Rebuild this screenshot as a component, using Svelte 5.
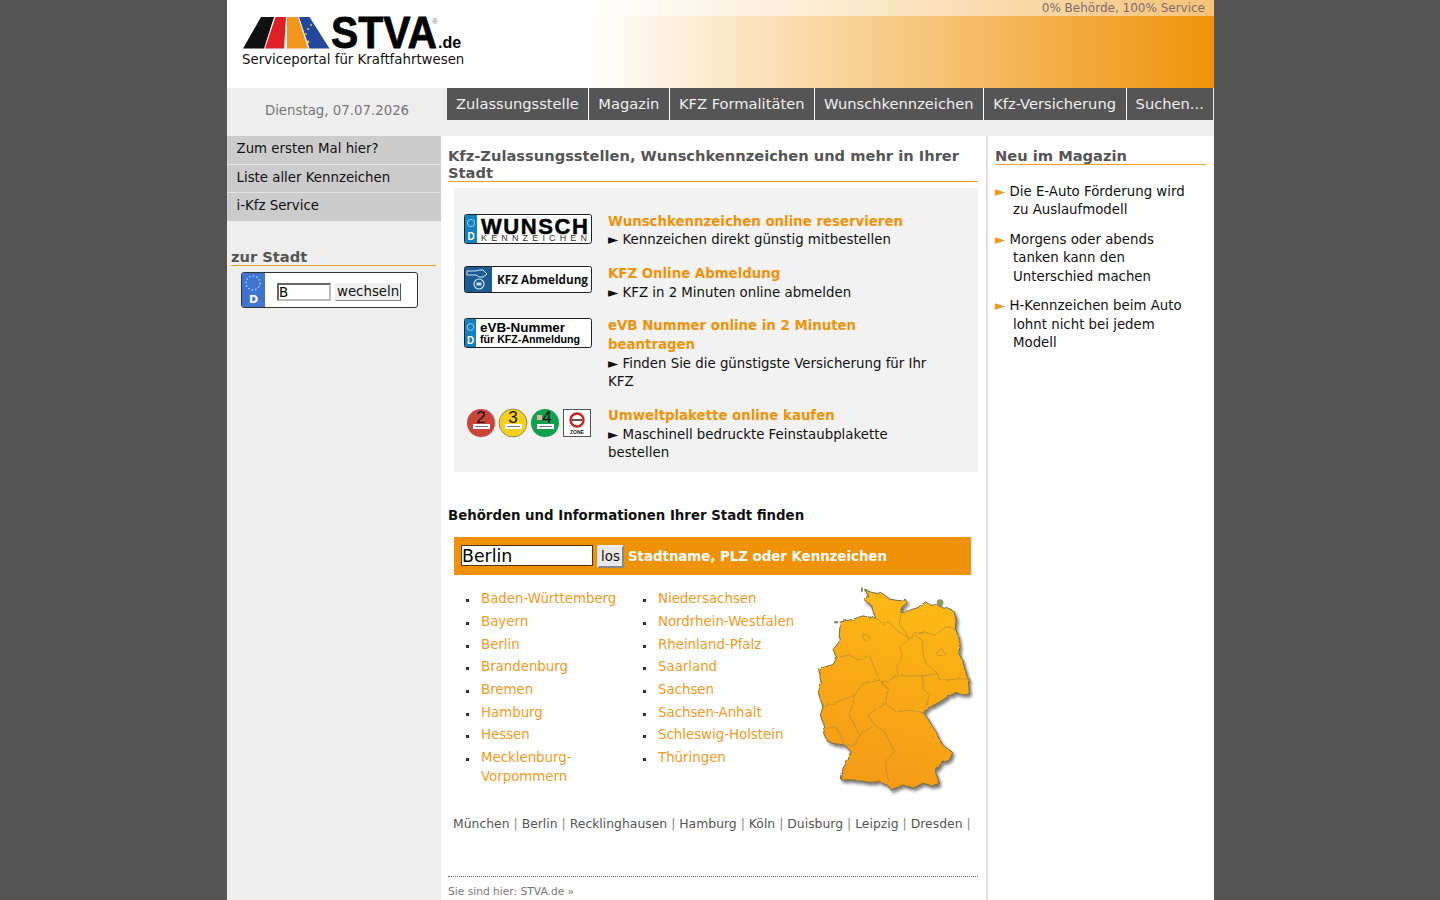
<script>
  const tabs = ['Zulassungsstelle', 'Magazin', 'KFZ Formalitäten', 'Wunschkennzeichen', 'Kfz-Versicherung', 'Suchen...'];
  const sideMenu = ['Zum ersten Mal hier?', 'Liste aller Kennzeichen', 'i-Kfz Service'];
  const statesA = ['Baden-Württemberg', 'Bayern', 'Berlin', 'Brandenburg', 'Bremen', 'Hamburg', 'Hessen', 'Mecklenburg-Vorpommern'];
  const statesB = ['Niedersachsen', 'Nordrhein-Westfalen', 'Rheinland-Pfalz', 'Saarland', 'Sachsen', 'Sachsen-Anhalt', 'Schleswig-Holstein', 'Thüringen'];
  const cities = ['München', 'Berlin', 'Recklinghausen', 'Hamburg', 'Köln', 'Duisburg', 'Leipzig', 'Dresden'];
  const news = [
    'Die E-Auto Förderung wird zu Auslaufmodell',
    'Morgens oder abends tanken kann den Unterschied machen',
    'H-Kennzeichen beim Auto lohnt nicht bei jedem Modell',
  ];
  const germany = 'M197 33 L225 45 L245 42 L262 55 L272 62 L298 66 L318 62 L323 72 L308 85 L302 100 L315 102 L335 93 L352 88 L378 70 L395 80 L410 78 L425 85 L445 88 L465 100 L470 125 L468 150 L478 175 L482 205 L478 225 L490 245 L497 275 L507 300 L510 345 L495 352 L470 342 L450 352 L425 368 L395 385 L372 403 L385 420 L400 445 L415 470 L430 500 L460 522 L450 545 L425 555 L408 580 L420 615 L400 622 L370 615 L340 630 L310 620 L275 635 L265 622 L240 610 L205 612 L175 605 L125 605 L130 570 L145 545 L155 520 L135 500 L100 495 L85 490 L72 465 L75 445 L62 410 L70 385 L55 340 L65 315 L57 270 L100 258 L112 238 L100 213 L118 190 L122 130 L160 122 L190 112 L228 118 L215 80 L195 65 L205 50 Z';
  const borders = [
    'M228 118 L250 135 L270 130 L285 150 L330 180',
    'M330 180 L345 165 L375 160 L405 170 L440 145 L468 150',
    'M305 105 L300 135 L330 180',
    'M330 180 L300 205 L310 230 L292 265 L295 292 L370 292 L415 285 L380 255 L370 220 L370 185 L345 170',
    'M415 285 L420 305 L505 300',
    'M370 292 L370 330 L390 350 L372 403',
    'M295 292 L245 315 L265 330 L258 375 L290 400 L330 395 L372 403',
    'M120 235 L150 230 L180 245 L210 230 L225 270 L240 305 L190 315 L165 350 L100 375 L70 385',
    'M240 305 L265 330 M258 375 L205 410 L225 440 L180 470 L150 410 L165 350',
    'M180 470 L165 500 L135 500 L110 445 L80 450',
    'M225 440 L255 460 L285 520 L258 550 L265 610',
    'M190 165 L210 175 L205 190 L190 180 Z',
    'M410 225 L425 208 L440 230 L415 232 Z',
  ];
</script>

<div class="page">
  <header class="top">
    <div class="brand">
      <svg class="logo" viewBox="0 0 222 36" width="222" height="36" role="img" aria-label="STVA.de">
        <polygon points="2,33.5 23,33.5 33,2 20,2" fill="#111" />
        <polygon points="24,33.5 43,33.5 45,2 34.5,2" fill="#e02027" />
        <polygon points="46,33.5 67,33.5 57,2 46,2" fill="#f0951e" />
        <polygon points="68.5,33.5 88.5,33.5 68.5,2 58,2" fill="#23479c" />
        <circle cx="70" cy="10" r="0.9" fill="#f4d020" />
        <circle cx="67" cy="14" r="0.9" fill="#f4d020" />
        <circle cx="65" cy="19" r="0.9" fill="#f4d020" />
        <circle cx="67" cy="27" r="1.4" fill="#f4d020" />
        <text x="90" y="33" class="logo-name" textLength="106" lengthAdjust="spacingAndGlyphs">STVA</text>
        <text x="197" y="33" class="logo-tld">.de</text>
        <text x="191" y="9" class="logo-reg">®</text>
      </svg>
      <div class="claim">Serviceportal für Kraftfahrtwesen</div>
    </div>
    <div class="slogan">0% Behörde, 100% Service</div>
  </header>

  <div class="navrow">
    <div class="date">Dienstag, 07.07.2026</div>
    <nav class="tabs">
      {#each tabs as t}
        <span class="tab">{t}</span>
      {/each}
    </nav>
  </div>

  <div class="columns">
    <aside class="left">
      <ul class="sidemenu">
        {#each sideMenu as m}
          <li>{m}</li>
        {/each}
      </ul>
      <h3 class="side-title">zur Stadt</h3>
      <form class="plateform" onsubmit={(e) => e.preventDefault()}>
        <svg class="euroband" viewBox="0 0 23 36" width="23" height="36">
          <rect width="23" height="36" fill="#3f74d0" />
          <circle cx="11" cy="11" r="7" fill="none" stroke="#9fc0ee" stroke-width="1.6" stroke-dasharray="1.6 2" />
          <text x="11.5" y="31" text-anchor="middle" class="band-d">D</text>
        </svg>
        <input class="kz" value="B" />
        <button class="wechseln" type="button">wechseln</button>
      </form>
    </aside>

    <main class="center">
      <h1 class="main-title">Kfz-Zulassungsstellen, Wunschkennzeichen und mehr in Ihrer Stadt</h1>
      <section class="offers">
        <div class="offer">
          <svg class="pic" viewBox="0 0 128 31" width="128" height="31">
            <rect x="0.5" y="0.5" width="127" height="29" rx="2" fill="#fff" stroke="#222" />
            <rect x="1" y="1" width="12" height="28" fill="#1480c0" />
            <circle cx="7" cy="9" r="3.6" fill="none" stroke="#8fd0ee" />
            <text x="7" y="26" text-anchor="middle" class="pl-d">D</text>
            <text x="17" y="20" class="pl-big" textLength="107" lengthAdjust="spacing">WUNSCH</text>
            <text x="17" y="27" class="pl-small" textLength="106" lengthAdjust="spacing">KENNZEICHEN</text>
          </svg>
          <div class="offer-text">
            <a href="#a">Wunschkennzeichen online reservieren</a>
            <p>► Kennzeichen direkt günstig mitbestellen</p>
          </div>
        </div>
        <div class="offer">
          <svg class="pic" viewBox="0 0 128 28" width="128" height="28">
            <rect x="0.5" y="0.5" width="127" height="26" rx="2" fill="#fff" stroke="#222" />
            <rect x="1" y="1" width="27" height="25" fill="#1c5c94" />
            <path d="M3 5 H12 L15 4 H19 L23 8 L19 11 H15 L12 9 H3 Z" fill="none" stroke="#cfe2f2" />
            <circle cx="15" cy="18" r="5" fill="none" stroke="#cfe2f2" stroke-width="1.2" />
            <rect x="12.5" y="16.5" width="5" height="3" fill="#cfe2f2" />
            <text x="33" y="17.5" class="pl-mid" textLength="91" lengthAdjust="spacingAndGlyphs">KFZ Abmeldung</text>
          </svg>
          <div class="offer-text">
            <a href="#a">KFZ Online Abmeldung</a>
            <p>► KFZ in 2 Minuten online abmelden</p>
          </div>
        </div>
        <div class="offer">
          <svg class="pic" viewBox="0 0 128 31" width="128" height="31">
            <rect x="0.5" y="0.5" width="127" height="29" rx="2" fill="#fff" stroke="#222" />
            <rect x="1" y="1" width="11" height="28" fill="#1480c0" />
            <circle cx="6.5" cy="9" r="3.4" fill="none" stroke="#8fd0ee" />
            <text x="6.5" y="26" text-anchor="middle" class="pl-d">D</text>
            <text x="16" y="14" class="pl-evb" textLength="85" lengthAdjust="spacingAndGlyphs">eVB-Nummer</text>
            <text x="16" y="25" class="pl-evb2" textLength="100" lengthAdjust="spacingAndGlyphs">für KFZ-Anmeldung</text>
          </svg>
          <div class="offer-text">
            <a href="#a">eVB Nummer online in 2 Minuten beantragen</a>
            <p>► Finden Sie die günstigste Versicherung für Ihr KFZ</p>
          </div>
        </div>
        <div class="offer">
          <svg class="pic" viewBox="0 0 128 30" width="128" height="30">
            <circle cx="17" cy="15" r="14" fill="#c9453a" />
            <circle cx="49" cy="15" r="14" fill="#f6d020" stroke="#555" stroke-width="0.6" />
            <circle cx="81" cy="15" r="14" fill="#10a050" />
            <rect x="9" y="16" width="17" height="5" fill="#fff" />
            <rect x="41" y="16" width="17" height="5" fill="#fff" />
            <rect x="73" y="16" width="17" height="5" fill="#fff" />
            <rect x="11" y="18" width="13" height="1" fill="#777" />
            <rect x="43" y="18" width="13" height="1" fill="#777" />
            <rect x="75" y="18" width="13" height="1" fill="#777" />
            <text x="17" y="15" text-anchor="middle" class="sticker">2</text>
            <text x="49" y="15" text-anchor="middle" class="sticker">3</text>
            <text x="83" y="15" text-anchor="middle" class="sticker">4</text>
            <rect x="73" y="7" width="5" height="5" fill="#e8b0a0" />
            <rect x="99.5" y="1.5" width="27" height="27" fill="#fff" stroke="#555" />
            <circle cx="113" cy="12" r="6.5" fill="#fff" stroke="#d02020" stroke-width="2.4" />
            <rect x="108" y="11" width="10" height="2" fill="#555" />
            <text x="113" y="26" text-anchor="middle" class="zone">ZONE</text>
          </svg>
          <div class="offer-text">
            <a href="#a">Umweltplakette online kaufen</a>
            <p>► Maschinell bedruckte Feinstaubplakette bestellen</p>
          </div>
        </div>
      </section>

      <h2 class="find-title">Behörden und Informationen Ihrer Stadt finden</h2>
      <form class="citybar" onsubmit={(e) => e.preventDefault()}>
        <input class="city" value="Berlin" />
        <button class="los" type="button">los</button>
        <span>Stadtname, PLZ oder Kennzeichen</span>
      </form>

      <div class="states">
        <ul class="col-a">
          {#each statesA as s}
            <li><a href="#s">{s}</a></li>
          {/each}
        </ul>
        <ul class="col-b">
          {#each statesB as s}
            <li><a href="#s">{s}</a></li>
          {/each}
        </ul>
        <svg class="map" viewBox="50 25 470 625" width="157" height="208">
          <defs>
            <linearGradient id="de" x1="0.6" y1="0" x2="0.4" y2="1">
              <stop offset="0" stop-color="#fdb913" />
              <stop offset="1" stop-color="#f59a18" />
            </linearGradient>
            <filter id="rough" x="-5%" y="-5%" width="110%" height="110%">
              <feTurbulence type="fractalNoise" baseFrequency="0.07" numOctaves="2" seed="4" />
              <feDisplacementMap in="SourceGraphic" scale="9" />
            </filter>
          </defs>
          <ellipse cx="187" cy="33" rx="3" ry="8" fill="#8a8a70" />
          <ellipse cx="110" cy="131" rx="7" ry="4" fill="#8a8a70" />
          <ellipse cx="422" cy="72" rx="10" ry="10" fill="#8a9a60" />
          <g class="shade">
            <g filter="url(#rough)">
              <path d={germany} class="land" />
              {#each borders as d}
                <path class="border" {d} />
              {/each}
            </g>
          </g>
        </svg>
      </div>

      <div class="cities">
        {#each cities as c}
          <span>{c}</span> <i>|</i>{' '}
        {/each}
      </div>

      <div class="crumbs">Sie sind hier: STVA.de »</div>
    </main>

    <aside class="right">
      <h3 class="right-title">Neu im Magazin</h3>
      <ul class="news">
        {#each news as n}
          <li><b>►</b> {n}</li>
        {/each}
      </ul>
    </aside>
  </div>
</div>

<style>
  :global(body) {
    margin: 0;
    background: #555;
    font-family: "DejaVu Sans", sans-serif;
    font-size: 13.33px;
    line-height: 18.67px;
    color: #111;
  }
  .page {
    width: 987px;
    height: 900px;
    margin-left: 227px;
    overflow: hidden;
    background: #fff;
  }
  .top {
    position: relative;
    height: 88px;
    background: linear-gradient(90deg, #fff 0, #fff 363px, #ef9208 100%);
  }
  .brand {
    padding: 15px 0 0 15px;
  }
  .logo {
    display: block;
    margin-left: -1px;
  }
  .logo-name {
    font: bold 44px "Liberation Sans", sans-serif;
    fill: #000;
    stroke: #000;
    stroke-width: 0.8px;
  }
  .logo-tld {
    font: bold 16px "Liberation Sans", sans-serif;
    fill: #000;
  }
  .logo-reg {
    font: 8px "Liberation Sans", sans-serif;
    fill: #777;
  }
  .claim {
    white-space: nowrap;
  }
  .slogan {
    position: absolute;
    top: 0;
    left: 0;
    right: 0;
    height: 16px;
    padding-right: 9px;
    box-sizing: border-box;
    text-align: right;
    font-size: 12px;
    line-height: 16px;
    color: #7d6a70;
    background: linear-gradient(90deg, rgb(255 255 255 / 0) 33%, rgb(255 255 255 / 0.55) 45%, rgb(255 255 255 / 0.45) 100%);
  }
  .navrow {
    display: flex;
    height: 48px;
    background: #eee;
  }
  .date {
    width: 220px;
    flex: none;
    padding-top: 14px;
    text-align: center;
    color: #777;
  }
  .tabs {
    display: flex;
    height: 32px;
    gap: 1px;
    background: #fff;
  }
  .tab {
    padding: 0 9.6px 0 9px;
    background: #555;
    color: #eee;
    font-size: 14.67px;
    line-height: 32px;
    white-space: nowrap;
  }
  .columns {
    display: grid;
    grid-template-columns: 214px 545px 2px 226px;
    height: 764px;
  }
  .left {
    background: #eee;
  }
  .sidemenu {
    list-style: none;
    height: 85px;
    margin: 0;
    padding: 0;
  }
  .sidemenu li {
    height: 27.67px;
    padding-left: 9.5px;
    background: #ccc;
    line-height: 25.5px;
    border-bottom: 1px solid #e4e4e4;
  }
  .sidemenu li:last-child {
    border-bottom: none;
  }
  .side-title {
    margin: 28px 5px 0 4px;
    border-bottom: 1px solid #eba418;
    color: #555;
    font-size: 14.67px;
    line-height: 16px;
  }
  .plateform {
    display: flex;
    align-items: center;
    width: 177px;
    height: 36px;
    margin: 6px 0 0 14px;
    border: 1px solid #333;
    border-radius: 3px;
    box-sizing: border-box;
    background: #fff;
    overflow: hidden;
  }
  .euroband {
    flex: none;
  }
  .band-d {
    font: bold 11px "DejaVu Sans", sans-serif;
    fill: #fff;
  }
  .kz {
    width: 54px;
    height: 18px;
    margin: 4px 0 0 12px;
    padding: 0;
    box-sizing: border-box;
    border: 2px inset #bbb;
    font: 13.33px "DejaVu Sans", sans-serif;
    background: #fff;
    outline: none;
  }
  .wechseln {
    height: 18px;
    margin: 4px 0 0 4px;
    padding: 0 1px;
    border: 1px solid;
    border-color: #eee #555 #888 #eee;
    background: #eee;
    font: 13.33px "DejaVu Sans", sans-serif;
    line-height: 16px;
    color: #111;
  }
  .center {
    padding: 12px 8px 0 7px;
    min-width: 0;
  }
  .main-title {
    margin: 0;
    border-bottom: 1px solid #eba418;
    color: #555;
    font-size: 14.67px;
    line-height: 16.5px;
    font-weight: bold;
  }
  .offers {
    margin: 6px 0 0 6px;
    padding: 24.7px 40px 8.7px 10px;
    background: #f2f2f2;
    display: flex;
    flex-direction: column;
    gap: 15px;
  }
  .offer {
    display: flex;
    align-items: flex-start;
    gap: 16px;
  }
  .pic {
    flex: none;
    margin-top: 1px;
  }
  .offer-text a {
    display: block;
    color: #ef9208;
    font-weight: bold;
    text-decoration: none;
  }
  .offer-text p {
    margin: 0;
    color: #111;
  }
  .pl-d {
    font: bold 10px "Liberation Sans", sans-serif;
    fill: #fff;
  }
  .pl-big {
    font: 900 22px "Liberation Sans", sans-serif;
    fill: #000;
    stroke: #000;
    stroke-width: 0.5px;
  }
  .pl-small {
    font: 9px "Liberation Sans", sans-serif;
    fill: #333;
  }
  .pl-mid {
    font: bold 12px "Open Sans", sans-serif;
    fill: #111;
  }
  .pl-evb {
    font: bold 13px "Liberation Sans", sans-serif;
    fill: #000;
  }
  .pl-evb2 {
    font: bold 10.5px "Liberation Sans", sans-serif;
    fill: #000;
  }
  .sticker {
    font: 17px "Liberation Sans", sans-serif;
    fill: #111;
  }
  .zone {
    font: bold 5px "Liberation Sans", sans-serif;
    fill: #222;
  }
  .find-title {
    margin: 35px 0 0;
    font-size: 13.33px;
    line-height: 18.67px;
    color: #111;
  }
  .citybar {
    display: flex;
    align-items: center;
    width: 517px;
    height: 38px;
    margin: 12px 0 0 6px;
    padding-left: 7px;
    box-sizing: border-box;
    background: #ef9208;
    color: #fff;
    font-weight: bold;
  }
  .city {
    width: 132px;
    height: 21px;
    margin-top: -1px;
    padding: 0;
    box-sizing: border-box;
    border: 1px solid #4a3410;
    font: 17.33px "DejaVu Sans", sans-serif;
    background: #fff;
    outline: none;
  }
  .los {
    height: 23px;
    width: 27px;
    margin-left: 4px;
    padding: 0;
    border: 2px solid;
    border-color: #eee #888 #888 #eee;
    background: #e8e8e8;
    font: 13.33px "DejaVu Sans", sans-serif;
    color: #111;
  }
  .citybar span {
    margin: 1px 0 0 4px;
  }
  .states {
    position: relative;
    display: flex;
    height: 225px;
    padding-top: 15px;
  }
  .states ul {
    list-style: none;
    margin: 0;
    padding: 0;
  }
  .states li {
    position: relative;
    margin-bottom: 4px;
  }
  .states li::before {
    content: '';
    position: absolute;
    left: -15px;
    top: 9px;
    width: 3px;
    height: 3px;
    background: #333;
  }
  .states a {
    color: #ef9a20;
    text-decoration: none;
  }
  .col-a {
    width: 143px;
    margin-left: 33px !important;
  }
  .col-b {
    width: 160px;
    margin-left: 34px !important;
  }
  .map {
    position: absolute;
    left: 368px;
    top: 12px;
    overflow: visible;
  }
  .shade {
    filter: drop-shadow(6px 8px 5px rgb(0 0 0 / 0.5));
  }
  .land {
    fill: url(#de);
    stroke: #6f6c48;
    stroke-width: 3;
    stroke-linejoin: round;
  }
  .cities {
    margin-left: 5px;
    font-size: 12.4px;
    line-height: 17px;
    color: #555;
    white-space: nowrap;
  }
  .cities i {
    font-style: normal;
    color: #888;
  }
  .crumbs {
    margin-top: 44px;
    padding-top: 7px;
    border-top: 1px dotted #666;
    font-size: 10.67px;
    line-height: 15px;
    color: #777;
  }
  .border {
    fill: none;
    stroke: #a98c3a;
    stroke-width: 2;
    stroke-linejoin: round;
  }
  .right {
    grid-column: 4;
    padding: 12px 8px 0 7px;
  }
  .center + .right {
    border-left: 2px solid #ddd;
    margin-left: -2px;
  }
  .right-title {
    margin: 0;
    border-bottom: 1px solid #eba418;
    color: #555;
    font-size: 14.67px;
    line-height: 16px;
  }
  .news {
    list-style: none;
    margin: 17.8px 0 0;
    padding: 0;
  }
  .news li {
    margin-bottom: 10.4px;
    padding: 0 14px 0 18px;
    text-indent: -18px;
  }
  .news b {
    font-weight: normal;
    color: #ef9a20;
  }
</style>
